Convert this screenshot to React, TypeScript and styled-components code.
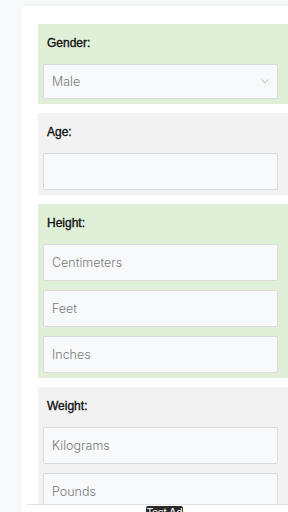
import React from "react";
import styled, { createGlobalStyle } from "styled-components";

const Global = createGlobalStyle`
  html, body { margin: 0; padding: 0; background: #f8f9fa; overflow: hidden; }
  body { font-family: "Liberation Sans", Arial, sans-serif; }
`;

const Page = styled.div`
  padding: 6px 0 0 21px;
  width: 300px;
`;

const Card = styled.div`
  background: #ffffff;
  box-shadow: 0 0 4px rgba(0, 0, 0, 0.06);
  padding: 18px 0 40px 17px;
  display: flex;
  flex-direction: column;
  gap: 9px;
`;

const Section = styled.div<{ $tone: "green" | "gray" }>`
  background: ${(p) => (p.$tone === "green" ? "#dfefd8" : "#f2f2f2")};
  padding: 9px 5px 5px 5px;
  display: flex;
  flex-direction: column;
  width: 245px;
  margin-right: -10px;
`;

const Label = styled.div`
  font-family: "Liberation Sans", Arial, sans-serif;
  font-weight: 400;
  -webkit-text-stroke: 0.35px #111;
  font-size: 12px;
  line-height: 20px;
  color: #111;
  padding-left: 4px;
  margin-bottom: 11px;
`;

const Fields = styled.div`
  display: flex;
  flex-direction: column;
  gap: 9px;
  width: 235px;
`;

const Field = styled.div<{ $h?: number }>`
  box-sizing: border-box;
  height: ${(p) => p.$h ?? 37}px;
  background: #f8f9fb;
  border: 1px solid #dcdcdc;
  border-radius: 2px;
  display: flex;
  align-items: center;
  justify-content: space-between;
  padding: 0 8px 0 8px;
  font-family: Inter, "Open Sans", sans-serif;
  font-weight: 300;
  font-size: 12.5px;
  color: #7a7a7a;
`;

const Chevron = () => (
  <svg width="8" height="5" viewBox="0 0 8 5">
    <path d="M0.5 0.5 L4 4 L7.5 0.5" fill="none" stroke="#aaa" strokeWidth="0.9" />
  </svg>
);

const AdBar = styled.div`
  position: fixed;
  left: 27px;
  right: 0;
  bottom: 0;
  height: 7px;
  background: #fff;
  border-top: 1px solid #e2e2e2;
  display: flex;
  justify-content: center;
  align-items: flex-start;
`;

const AdTag = styled.span`
  margin-left: 14px;
  margin-top: 1px;
  width: 37px;
  box-sizing: border-box;
  text-align: center;
  background: #2a2a2a;
  color: #fff;
  font-family: "Liberation Sans", Arial, sans-serif;
  font-size: 11px;
  line-height: 12px;
  border-radius: 2px 2px 0 0;
  height: 6px;
  overflow: hidden;
  white-space: nowrap;
`;

export default function App() {
  return (
    <>
      <Global />
      <Page>
        <Card>
          <Section $tone="green">
            <Label>Gender:</Label>
            <Fields>
              <Field $h={35}>
                <span>Male</span>
                <Chevron />
              </Field>
            </Fields>
          </Section>
          <Section $tone="gray">
            <Label>Age:</Label>
            <Fields>
              <Field />
            </Fields>
          </Section>
          <Section $tone="green">
            <Label>Height:</Label>
            <Fields>
              <Field>Centimeters</Field>
              <Field>Feet</Field>
              <Field>Inches</Field>
            </Fields>
          </Section>
          <Section $tone="gray">
            <Label>Weight:</Label>
            <Fields>
              <Field>Kilograms</Field>
              <Field>Pounds</Field>
            </Fields>
          </Section>
        </Card>
      </Page>
      <AdBar>
        <AdTag>Test Ad</AdTag>
      </AdBar>
    </>
  );
}
